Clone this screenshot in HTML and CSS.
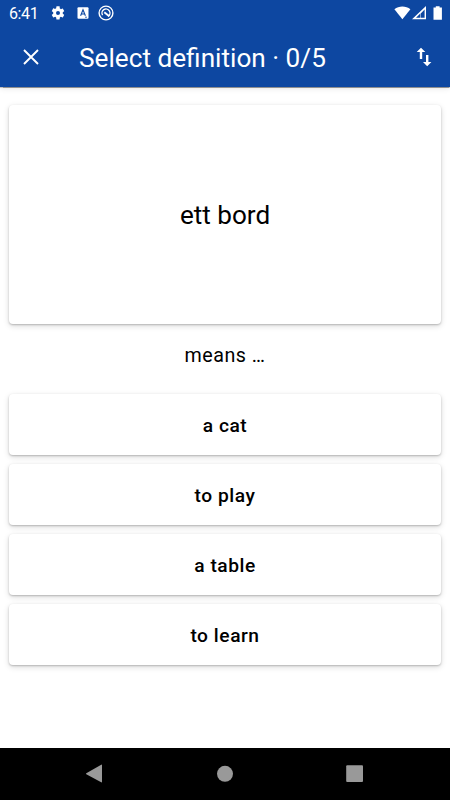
FILE: index.html
```html
<!DOCTYPE html>
<html lang="en">
<head>
<meta charset="utf-8">
<title>Select definition</title>
<link rel="stylesheet" href="styles.css">
</head>
<body>
<div class="screen">
  <header class="header">
    <div class="status">
      <span class="clock">6:41</span>
      <svg class="gear" width="16" height="16" viewBox="0 0 24 24"><path fill="#fff" d="M19.140 12.940c.04-.3.06-.61.06-.94s-.02-.64-.07-.94l2.030-1.580a.49.49 0 0 0 .12-.61l-1.920-3.320a.49.49 0 0 0-.59-.22l-2.390.96a7 7 0 0 0-1.620-.94l-.36-2.540A.48.48 0 0 0 13.920 2h-3.840a.48.48 0 0 0-.47.41l-.36 2.540a7.400 7.400 0 0 0-1.620.94l-2.390-.96a.48.48 0 0 0-.59.22L2.740 8.870a.47.47 0 0 0 .12.61l2.030 1.580c-.05.3-.09.63-.09.94s.02.64.07.94l-2.030 1.580a.49.49 0 0 0-.12.61l1.920 3.320c.12.22.37.29.59.22l2.390-.96c.5.38 1.030.7 1.620.94l.36 2.540c.05.24.24.41.48.41h3.840c.24 0 .44-.17.47-.41l.36-2.540a7 7 0 0 0 1.620-.94l2.390.96c.22.08.47 0 .59-.22l1.920-3.320a.47.47 0 0 0-.12-.61zM12 15a3 3 0 1 1 0-6 3 3 0 0 1 0 6z"/></svg>
      <svg class="letter" width="12" height="12" viewBox="0 0 12 12"><rect x=".5" y=".3" width="11" height="11.400" rx="1" fill="#fff"/><path d="M3.600 8.800 6 2.800l2.400 6M4.600 7h2.800" fill="none" stroke="#0d47a1" stroke-width="1.100"/><path d="M8 10.200h2" stroke="#0d47a1" stroke-width=".8"/></svg>
      <svg class="ring" width="16" height="16" viewBox="0 0 16 16" fill="none" stroke="#fff"><circle cx="8" cy="8" r="6.900" stroke-width="1.400"/><path d="M4.600 10.200A4 4 0 1 1 10.200 11.400" stroke-width="1.400"/><path d="m6.300 7.200 5 4" stroke-width="1.900"/></svg>
      <span class="spacer"></span>
      <svg width="50" height="16" viewBox="0 0 50 16"><path fill="#fff" d="M.4 4.200C4.800.7 12 .7 16.400 4.200L8.400 14.200z"/><path fill="#fff" fill-rule="evenodd" d="M32 1v13.300H18zM30.600 4.400 26.500 8.700v4.100h4.100z"/><path fill="#fff" d="M39.500 2.600h2.300V1.300h3.800v1.300h2.300v12.200h-8.400z"/><path fill="#0d47a1" d="M22 12.800 26 8.700v4.100z"/></svg>
    </div>
    <div class="toolbar">
      <svg class="close" width="16" height="16" viewBox="0 0 16 16"><path d="m1 1 14 14M15 1 1 15" stroke="#fff" stroke-width="1.900"/></svg>
      <h1 class="title">Select definition · 0/5</h1>
      <svg class="swap" width="16" height="20" viewBox="0 0 16 20"><path fill="#fff" d="M3.800 12V5H.7L5 .7 9.300 5H6.200v7zM10 8v7H7l4.200 4.300L15.400 15h-3V8z"/></svg>
    </div>
  </header>
  <main class="content">
    <section class="card prompt">ett bord</section>
    <p class="means">means …</p>
    <div class="answers">
      <button class="card answer">a cat</button>
      <button class="card answer">to play</button>
      <button class="card answer">a table</button>
      <button class="card answer">to learn</button>
    </div>
  </main>
  <nav class="navbar">
    <svg width="450" height="52" viewBox="0 0 450 52" fill="#999"><path d="M86.300 25.200 101.200 16.700q.8-.3.800.5v16.600q0 .8-.8.500L86.300 26.300q-.6-.5 0-1.100z"/><circle cx="225" cy="25.800" r="8"/><rect x="346.200" y="17.300" width="16.800" height="16.700" rx="1"/></svg>
  </nav>
</div>
</body>
</html>
```

FILE: styles.css
```css
* { box-sizing: border-box; }
body { margin: 0; background: #fff; font-family: Roboto, "Liberation Sans", sans-serif; color: #000; }
.screen { width: 450px; height: 800px; display: flex; flex-direction: column; overflow: hidden; }
.header { height: 87px; flex: none; background: #0d47a1; color: #fff; box-shadow: 0 0.5px 1px rgba(0, 0, 0, 0.4), 0 1px 6px rgba(0, 0, 0, 0.12); }
.status { height: 26px; display: flex; align-items: center; padding: 0 6px 0 9px; }
.clock { font-size: 16px; line-height: 26px; width: 30px; padding-top: 1px; letter-spacing: -0.4px; }
.gear { margin-left: 11px; }
.letter { margin-left: 11px; }
.ring { margin-left: 9px; }
.spacer { flex: 1; }
.status svg { flex: none; }
.toolbar { height: 61px; display: flex; align-items: center; padding: 0 18.5px 0 22.5px; }
.close { flex: none; }
.title { flex: 1; margin: 2px 0 0 40.5px; font-size: 26.2px; line-height: 32px; font-weight: 400; white-space: nowrap; }
.swap { flex: none; }
.content { flex: 1; padding: 18px 9px 0; }
.card { width: 100%; background: #fff; border: 0; border-radius: 4px; display: flex; align-items: center; justify-content: center; box-shadow: 0 1px 2px rgba(0, 0, 0, 0.22), 0 2px 6px rgba(0, 0, 0, 0.14); }
.prompt { height: 218.5px; font-size: 26.1px; padding-top: 2px; }
.means { margin: 19px 0 26.5px; font-size: 19.7px; line-height: 25px; letter-spacing: 0.5px; text-align: center; }
.answers { display: flex; flex-direction: column; gap: 9px; }
.answer { height: 61px; padding: 2px 0 0; font: 500 19.2px Roboto, "Liberation Sans", sans-serif; letter-spacing: 0.55px; color: #000; }
.navbar { height: 52px; flex: none; background: #000; }
.navbar svg { display: block; }
```
